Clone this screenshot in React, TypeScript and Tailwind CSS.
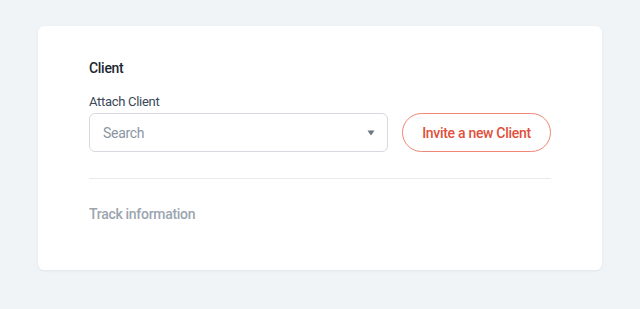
export default function App() {
  return (
    <div
      className="min-h-[309px] w-full bg-[#f1f4f7] px-[38px] pt-[26px] tracking-[-0.3px]"
      style={{ fontFamily: "Roboto, 'Noto Sans', sans-serif" }}
    >
      <div className="h-[244px] rounded-md bg-white px-[51px] pt-[32px] shadow-[0_1px_3px_rgba(30,40,60,0.08)]">
        <h2 className="text-[14px] leading-[20px] font-medium text-[#1b2632]">Client</h2>

        <label className="mt-[15px] block text-[13px] leading-[18px] text-[#3a4858]">
          Attach Client
        </label>

        <div className="mt-[2px] flex items-center gap-[14px]">
          <div className="flex h-[39px] w-[299px] items-center justify-between rounded-md border border-[#d6dae0] pr-[12px] pl-[13px]">
            <span className="mt-[2px] text-[14px] text-[#8b95a1]">Search</span>
            <svg width="8" height="6" viewBox="0 0 8 6" className="mt-[1px]">
              <path d="M0.5 0.5 L7.5 0.5 L4 5.5 Z" fill="#6b7580" />
            </svg>
          </div>

          <button className="flex h-[39px] w-[149px] items-center justify-center rounded-full border border-[#f08676] pt-[1px] text-[14px] font-medium text-[#df4f3b]">
            Invite a new Client
          </button>
        </div>

        <div className="mt-[26px] h-px bg-[#e9ecef]" />

        <p className="mt-[25px] text-[14px] leading-[20px] font-medium text-[#9ca5af]">
          Track information
        </p>
      </div>
    </div>
  );
}
